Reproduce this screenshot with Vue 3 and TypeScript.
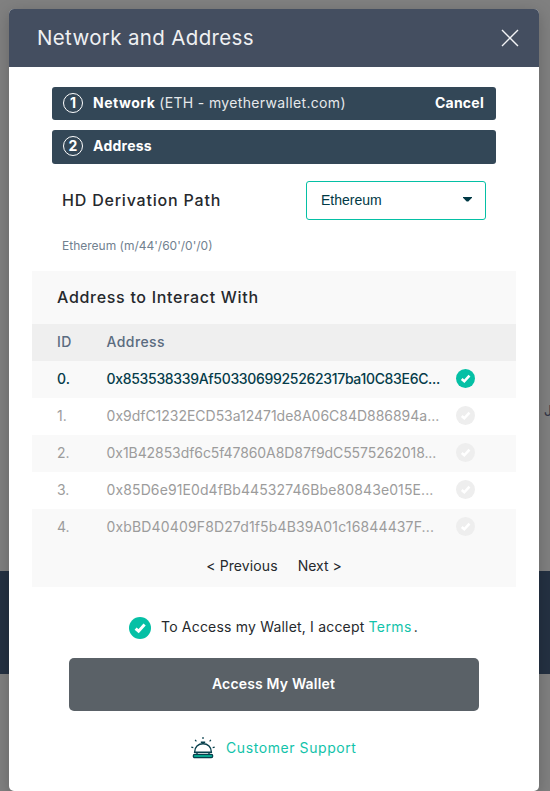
<script setup lang="ts">
import { ref } from 'vue'

interface Account {
  id: number
  address: string
}

const accounts: Account[] = [
  { id: 0, address: '0x853538339Af5033069925262317ba10C83E6C...' },
  { id: 1, address: '0x9dfC1232ECD53a12471de8A06C84D886894a...' },
  { id: 2, address: '0x1B42853df6c5f47860A8D87f9dC5575262018...' },
  { id: 3, address: '0x85D6e91E0d4fBb44532746Bbe80843e015E...' },
  { id: 4, address: '0xbBD40409F8D27d1f5b4B39A01c16844437F...' },
]
const selected = ref(0)
const accepted = ref(true)
</script>

<template>
  <div class="page">
    <div class="band"></div>
    <span class="behind">J</span>
    <section class="modal">
      <header class="head">
        <h1>Network and Address</h1>
        <svg class="close" viewBox="0 0 18 18"><path d="M1 1 17 17M17 1 1 17" /></svg>
      </header>

      <div class="steps">
        <div class="step">
          <span class="num">1</span>
          <b class="network">Network</b>
          <span class="host">(ETH - myetherwallet.com)</span>
          <b class="cancel">Cancel</b>
        </div>
        <div class="step second">
          <span class="num">2</span>
          <b class="addr">Address</b>
        </div>
      </div>

      <div class="derivation">
        <h2>HD Derivation Path</h2>
        <div class="select">
          <span>Ethereum</span>
          <svg viewBox="0 0 9 5"><path d="M0 0h9v.8L5.3 4.5h-1.6L0 .8z" /></svg>
        </div>
      </div>
      <p class="path">Ethereum (m/44'/60'/0'/0)</p>

      <div class="table">
        <h2>Address to Interact With</h2>
        <div class="row labels"><span class="id">ID</span><span>Address</span></div>
        <ul>
          <li
            v-for="a in accounts"
            :key="a.id"
            class="row"
            :class="{ on: a.id === selected }"
            @click="selected = a.id"
          >
            <span class="id">{{ a.id }}.</span>
            <span class="hash">{{ a.address }}</span>
            <svg class="check" viewBox="0 0 22 22">
              <circle cx="11" cy="11" r="11" />
              <path d="M6.6 11.6 9.6 14.2 15.6 7.6" />
            </svg>
          </li>
        </ul>
        <div class="pager"><span class="prev">&lt; Previous</span><span>Next &gt;</span></div>
      </div>

      <div class="terms" @click="accepted = !accepted">
        <svg class="check big" :class="{ checked: accepted }" viewBox="0 0 22 22">
          <circle cx="11" cy="11" r="11" />
          <path d="M6.6 11.6 9.6 14.2 15.6 7.6" />
        </svg>
        <span class="accept">To Access my Wallet, I accept</span>
        <a>Terms</a>
        <span>.</span>
      </div>

      <button class="access">Access My Wallet</button>

      <div class="support">
        <svg class="bell" viewBox="0 0 24 22">
          <path class="line" d="M3.6 15.2C3.6 10 7.2 6.8 12 6.8s8.4 3.2 8.4 8.4z" />
          <path class="line" d="M9.8 5.2h4.4M12 5.2v1.4M6 15.5v2M18 15.5v2" />
          <rect class="base" x="2.3" y="17.3" width="19.4" height="3.4" rx="1.4" />
          <path class="rays" d="M12 0v2M4.1 2.9l1.3 1.4M19.9 2.9l-1.3 1.4M.3 10.2l2 .5M23.7 10.2l-2 .5" />
        </svg>
        <a>Customer Support</a>
      </div>
    </section>
  </div>
</template>

<style>
body {
  margin: 0;
}
</style>

<style scoped>
.page {
  position: relative;
  box-sizing: border-box;
  width: 550px;
  height: 791px;
  padding: 9px 11px 0 9px;
  overflow: hidden;
  background: #808080;
  font-family: Inter, 'Open Sans', sans-serif;
  font-size: 14px;
  font-weight: 400;
  color: #26292d;
}
.band {
  position: absolute;
  left: 0;
  top: 571px;
  width: 100%;
  height: 103px;
  background: #243142;
}
.behind {
  position: absolute;
  left: 544px;
  top: 402px;
  font-size: 14px;
  line-height: 18px;
  color: #343747;
}
.modal {
  position: relative;
  display: flex;
  flex-direction: column;
  height: 782px;
  border-radius: 5px;
  overflow: hidden;
  background: #fff;
  box-shadow: 0 4px 16px rgba(0, 0, 0, 0.22);
}
.head {
  display: flex;
  flex: none;
  align-items: center;
  justify-content: space-between;
  box-sizing: border-box;
  height: 58px;
  padding: 0 20px 0 28px;
  background: #444e60;
}
h1 {
  margin: 0;
  font-size: 20.5px;
  line-height: 28px;
  font-weight: 400;
  letter-spacing: 0.35px;
  color: #eff0f2;
}
.close {
  width: 18px;
  height: 18px;
  fill: none;
  stroke: #f3f4f6;
  stroke-width: 1.4;
}
.steps {
  display: flex;
  flex-direction: column;
  gap: 10px;
  padding: 20px 43px 0;
}
.step {
  display: flex;
  align-items: center;
  box-sizing: border-box;
  height: 33px;
  padding: 0 12px 2px 11px;
  border-radius: 3px;
  background: #334757;
  color: #fff;
  line-height: 20px;
}
.step.second {
  height: 34px;
}
.step b {
  font-weight: 700;
}
.num {
  display: flex;
  align-items: center;
  justify-content: center;
  box-sizing: border-box;
  width: 20px;
  height: 20px;
  margin-right: 10px;
  border: 1px solid #fff;
  border-radius: 50%;
  font-size: 14px;
  font-weight: 700;
}
.network {
  margin-right: 4px;
  letter-spacing: 0.5px;
}
.host {
  font-weight: 400;
  letter-spacing: 0.34px;
  color: #e6e9eb;
}
.cancel {
  margin-left: auto;
  letter-spacing: 0.25px;
}
.addr {
  letter-spacing: 0.25px;
}
h2 {
  margin: 0;
  font-size: 16px;
  line-height: 22px;
  font-weight: 500;
  letter-spacing: 0.8px;
}
.derivation {
  display: flex;
  align-items: center;
  justify-content: space-between;
  padding: 17px 53px 0;
}
.derivation h2 {
  padding-bottom: 2px;
}
.select {
  display: flex;
  align-items: center;
  justify-content: space-between;
  box-sizing: border-box;
  width: 180px;
  height: 39px;
  padding: 0 13px 2px 14px;
  border: 1px solid #05c0a5;
  border-radius: 3px;
  font-family: 'Liberation Sans', sans-serif;
  font-size: 14px;
  color: #003945;
}
.select svg {
  width: 9px;
  height: 5px;
  fill: #003945;
}
.path {
  margin: 17px 53px 0;
  font-size: 12px;
  line-height: 18px;
  font-weight: 400;
  color: #71818f;
}
.table {
  margin: 16px 23px 0;
  background: #f9f9f9;
}
.table h2 {
  padding: 15px 25px 16px;
  letter-spacing: 0.7px;
}
ul {
  margin: 0;
  padding: 0;
  list-style: none;
}
.row {
  display: flex;
  align-items: center;
  box-sizing: border-box;
  height: 37px;
  padding: 0 41px 2px 25px;
  color: #9c9c9c;
}
.row .id {
  width: 49.6px;
}
li.row:nth-child(even) {
  background: #fff;
}
.row.labels {
  background: #efefef;
  font-weight: 500;
  letter-spacing: 0.4px;
  color: #5a6b7f;
}
.row.on {
  font-weight: 500;
  color: #053c4a;
}
li.row:nth-child(1) .hash {
  letter-spacing: -0.32px;
}
li.row:nth-child(2) .hash {
  letter-spacing: -0.02px;
}
li.row:nth-child(3) .hash {
  letter-spacing: -0.07px;
}
li.row:nth-child(4) .hash {
  letter-spacing: 0.1px;
}
li.row:nth-child(5) .hash {
  letter-spacing: 0.14px;
}
.check {
  flex: none;
  width: 19px;
  height: 19px;
  margin: 0 0 0 auto;
  fill: #eee;
}
.check path {
  fill: none;
  stroke: #fff;
  stroke-width: 3;
}
.on .check,
.check.checked {
  fill: #05c0a5;
}
.check.big {
  width: 22px;
  height: 22px;
  margin: 2px 10px 0 0;
}
.pager {
  display: flex;
  justify-content: center;
  gap: 20px;
  height: 41px;
  line-height: 40px;
}
.prev {
  letter-spacing: 0.1px;
}
.terms {
  display: flex;
  align-items: center;
  height: 24px;
  margin: 28px 0 0 120px;
}
.terms span,
.terms a {
  padding-bottom: 2px;
}
.accept {
  margin-right: 4px;
  letter-spacing: 0.19px;
}
a {
  font-weight: 400;
  color: #12c3aa;
}
.terms a {
  margin-right: 2px;
  letter-spacing: 0.4px;
}
.access {
  flex: none;
  width: 410px;
  height: 53px;
  margin: 19px 0 0 60px;
  padding: 0 1px 2px 0;
  border: 0;
  border-radius: 5px;
  background: #5a6167;
  font: 600 14px/20px Inter, 'Open Sans', sans-serif;
  letter-spacing: 0.17px;
  color: #fff;
}
.support {
  display: flex;
  align-items: center;
  height: 24px;
  margin: 25px 0 0 182px;
}
.bell {
  width: 24px;
  height: 22px;
  margin: 0 11px 0 0;
  overflow: visible;
}
.bell .line {
  fill: #fff;
  stroke: #073f4c;
  stroke-width: 1.4;
}
.bell .base {
  fill: #06a58e;
  stroke: #073f4c;
  stroke-width: 1.2;
}
.bell .rays {
  fill: none;
  stroke: #073f4c;
  stroke-width: 1.2;
}
.support a {
  padding-bottom: 2px;
  letter-spacing: 0.58px;
}
</style>
